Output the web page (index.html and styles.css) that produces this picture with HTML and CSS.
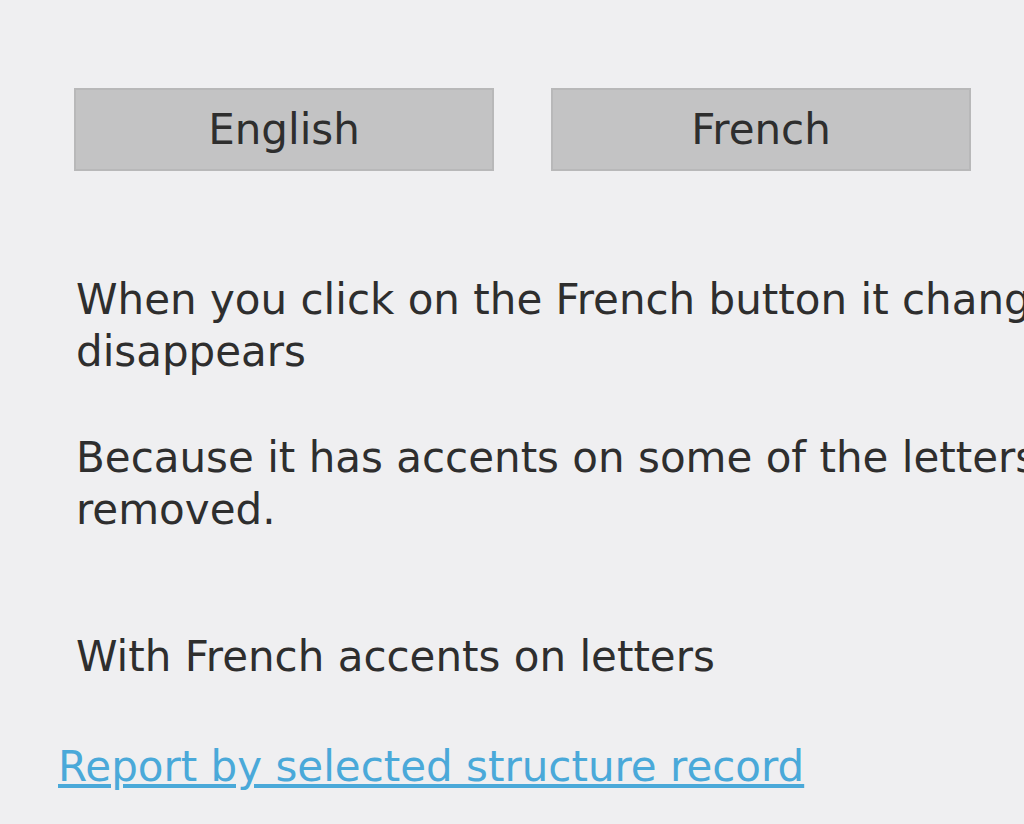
FILE: index.html
```html
<!DOCTYPE html>
<html>
<head>
<meta charset="utf-8">
<link rel="stylesheet" href="styles.css">
</head>
<body>
<div class="page">
  <div class="buttons">
    <button class="btn">English</button>
    <button class="btn">French</button>
  </div>
  <div class="content">
    <p class="para">When you click on the French button it changes the text to French and the text<br>disappears</p>
    <p class="para">Because it has accents on some of the letters, when the accents are<br>removed.</p>
    <p class="para para-accent">With French accents on letters</p>
  </div>
  <a class="report-link" href="#">Report by selected structure record</a>
</div>
</body>
</html>
```
FILE: styles.css
```css
html, body {
  margin: 0;
  padding: 0;
  background: #efeff1;
  overflow: hidden;
}
.page {
  width: 1024px;
  height: 824px;
  overflow: hidden;
  font-family: "DejaVu Sans", Verdana, sans-serif;
  color: #2e2e2e;
  padding-top: 88px;
  box-sizing: border-box;
}
.buttons {
  display: flex;
  gap: 57px;
  padding-left: 74px;
}
.btn {
  width: 420px;
  height: 83px;
  background: #c3c3c4;
  border: 2px solid #b8b8b9;
  font-family: "DejaVu Sans", Verdana, sans-serif;
  font-size: 42px;
  color: #2e2e2e;
  padding: 0;
  margin: 0;
}
.content {
  padding-left: 76px;
  width: 2000px;
  padding-top: 103px;
}
.para {
  margin: 0 0 54px 0;
  font-size: 42px;
  line-height: 52px;
  white-space: nowrap;
}
.para-accent {
  margin-top: 95px;
  margin-bottom: 58px;
}
.report-link {
  display: inline-block;
  margin-left: 58px;
  font-size: 42px;
  line-height: 52px;
  color: #4aa9d9;
  text-decoration: underline;
  white-space: nowrap;
}
```
